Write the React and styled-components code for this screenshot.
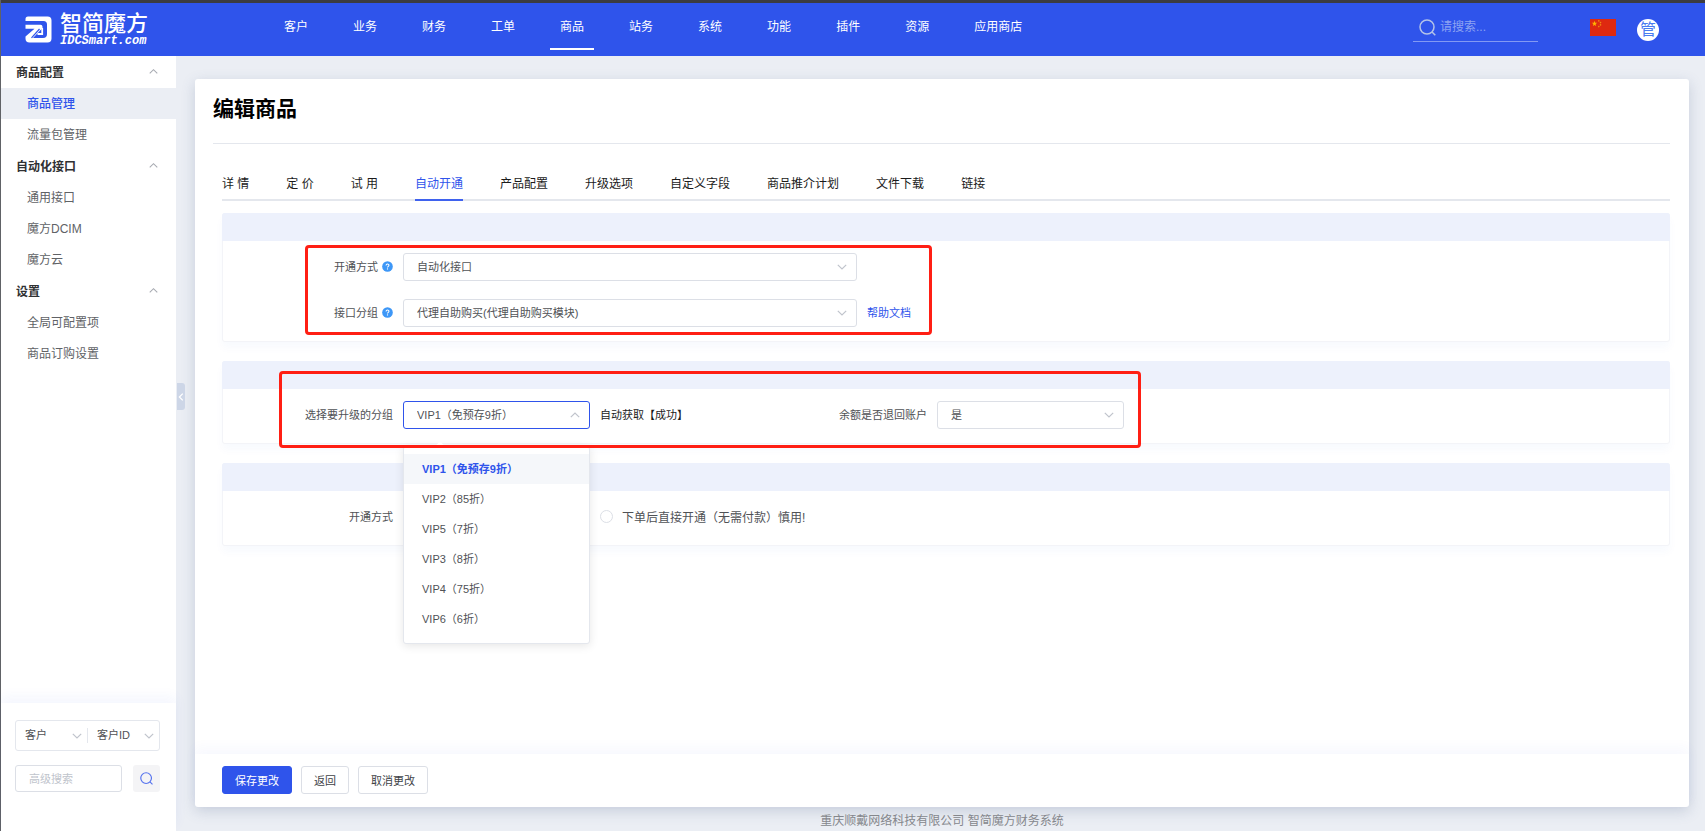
import React, { useState } from "react";
import styled, { createGlobalStyle } from "styled-components";

const GlobalStyle = createGlobalStyle`
  *, *::before, *::after {
    box-sizing: border-box;
  }
  body {
    margin: 0;
    background: #ebeef4;
  }
  body, button, input, select {
    font-family: "Liberation Sans", "Noto Sans CJK SC", sans-serif;
  }
  h1, h2, ul, p {
    margin: 0;
    padding: 0;
  }
  ul {
    list-style: none;
  }
  a {
    text-decoration: none;
  }
`;

const Page = styled.div`
  min-height: 100vh;
  display: flex;
  flex-direction: column;
  border-left: 1px solid #606266;
`;

const Header = styled.header`
  display: flex;
  align-items: flex-start;
  height: 56px;
  padding: 0 46px 0 24px;
  border-top: 3px solid #3c3c40;
  background: #2f54eb;
`;

const Logo = styled.a`
  display: flex;
  align-items: center;
  gap: 8px;
  width: 249px;
  height: 53px;
  flex-shrink: 0;
  color: #fff;
`;
const LogoText = styled.span`
  display: flex;
  flex-direction: column;
`;
const LogoName = styled.span`
  font-size: 22px;
  font-weight: 500;
  line-height: 22px;
`;
const LogoDomain = styled.span`
  font-family: "Liberation Mono", monospace;
  font-size: 12px;
  font-weight: 700;
  font-style: italic;
  line-height: 12px;
`;

const Nav = styled.nav`
  display: flex;
  flex: 1;
  gap: 25px;
`;
const NavLink = styled.a`
  padding: 14px 10px 11px;
  font-size: 12px;
  line-height: 20px;
  color: #fff;
  white-space: nowrap;
  border-bottom: 2px solid ${(props) => (props.$active ? "#fff" : "transparent")};
`;

const HeaderSearch = styled.label`
  display: flex;
  align-items: center;
  gap: 4px;
  width: 125px;
  height: 29px;
  margin: 10px 52px 0 0;
  padding-left: 6px;
  border-bottom: 1px solid #8299f3;
  color: #b4c3e8;

  input {
    width: 80px;
    padding: 0;
    border: 0;
    outline: 0;
    background: none;
    font-size: 12px;
    color: #fff;
  }
  input::placeholder {
    color: #8da3f2;
  }
`;
const Flag = styled.button`
  display: flex;
  margin: 16px 21px 0 0;
  padding: 0;
  border: 0;
  background: none;
`;
const Avatar = styled.button`
  width: 22px;
  height: 22px;
  margin-top: 16px;
  padding: 0;
  border: 0;
  border-radius: 50%;
  background: #fff;
  color: #4a7cf0;
  font-size: 16px;
  line-height: 20px;
`;

const Layout = styled.div`
  flex: 1;
  display: flex;
`;

const Sidebar = styled.aside`
  width: 175px;
  flex-shrink: 0;
  display: flex;
  flex-direction: column;
  background: #fff;
`;
const MenuTitle = styled.button`
  display: flex;
  align-items: center;
  justify-content: space-between;
  width: 100%;
  height: 32px;
  padding: 0 18px 2px 15px;
  border: 0;
  background: none;
  font-size: 12px;
  font-weight: 700;
  color: #303133;

  svg {
    color: #a8abb2;
  }
`;
const MenuLink = styled.a`
  display: block;
  padding: 1px 0 0 26px;
  font-size: 12px;
  line-height: 30px;
  color: ${(props) => (props.$active ? "#2f54eb" : "#606266")};
  font-weight: ${(props) => (props.$active ? 500 : 400)};
  background: ${(props) => (props.$active ? "#ebeef4" : "none")};
`;

const QuickSearch = styled.form`
  margin-top: auto;
  padding: 17px 16px 39px 14px;
  box-shadow: 0 -6px 12px rgba(47, 84, 235, 0.05);
`;
const Combo = styled.div`
  display: flex;
  align-items: center;
  height: 31px;
  margin-bottom: 14px;
  border: 1px solid #e4e7ed;
  border-radius: 3px;
`;
const ComboDivider = styled.span`
  width: 1px;
  height: 15px;
  background: #e4e7ed;
`;
const SearchRow = styled.div`
  display: flex;
  justify-content: space-between;
`;
const SearchInput = styled.input`
  width: 107px;
  height: 27px;
  padding: 0 13px;
  border: 1px solid #dcdfe6;
  border-radius: 3px;
  outline: 0;
  font-size: 11px;

  &::placeholder {
    color: #c0c4cc;
  }
`;
const SearchButton = styled.button`
  display: flex;
  align-items: center;
  justify-content: center;
  width: 27px;
  height: 27px;
  padding: 0;
  border: 0;
  border-radius: 3px;
  background: #f4f4f6;
  color: #5673ee;
`;

const Main = styled.main`
  position: relative;
  flex: 1;
  min-width: 0;
  display: flex;
  flex-direction: column;
  padding: 23px 16px 0 19px;
`;
const Collapse = styled.button`
  position: absolute;
  left: 1px;
  top: 327px;
  display: flex;
  align-items: center;
  justify-content: center;
  width: 8px;
  height: 27px;
  padding: 0;
  border: 0;
  border-radius: 0 3px 3px 0;
  background: #cdd6e7;
  color: #fff;
`;

const Card = styled.div`
  flex: 1;
  display: flex;
  flex-direction: column;
  border-radius: 3px;
  background: #fff;
  box-shadow: 0 4px 14px rgba(70, 90, 130, 0.22);
`;
const CardBody = styled.div`
  flex: 1;
  padding: 0 19px 24px 18px;
`;
const Title = styled.h1`
  padding: 16px 0 20px;
  border-bottom: 1px solid #e4e7ed;
  font-size: 21px;
  font-weight: 700;
  line-height: 28px;
  color: #000;
`;
const Content = styled.div`
  margin-left: 9px;
`;

const Tabs = styled.nav`
  display: flex;
  gap: 37px;
  margin: 26px 0 12px;
  box-shadow: inset 0 -2px #e4e7ed;
`;
const Tab = styled.a`
  font-size: 12px;
  line-height: 29px;
  color: ${(props) => (props.$active ? "#2f54eb" : "#1b1b1b")};
  border-bottom: 2px solid ${(props) => (props.$active ? "#3f62ee" : "transparent")};
`;

const Section = styled.section`
  position: relative;
  margin-bottom: 19px;
  border-radius: 3px;
  box-shadow: inset 0 0 0 1px #f3f4f8, 0 6px 8px rgba(47, 84, 235, 0.03);
`;
const SectionHead = styled.div`
  height: 28px;
  border-radius: 3px 3px 0 0;
  background: #edf1fc;
`;
const SectionBody = styled.div`
  display: flex;
  flex-direction: column;
  gap: 18px;
  padding: 12px 0 15px;
`;
const Row = styled.div`
  display: grid;
  grid-template-columns: ${(props) => props.$columns};
  align-items: center;
  column-gap: 10px;
  min-height: 28px;
`;
const Label = styled.label`
  display: flex;
  align-items: center;
  justify-content: flex-end;
  gap: 4px;
  padding-bottom: 2px;
  font-size: 11px;
  color: #505256;
`;
const Note = styled.span`
  padding-bottom: 2px;
  font-size: 11px;
  color: #1b1b1b;
  white-space: nowrap;
`;
const HelpLink = styled.a`
  padding-bottom: 2px;
  font-size: 11px;
  color: #2f54eb;
`;

const SelectBox = styled.div`
  position: relative;
  display: flex;
  flex: 1;
  align-items: center;
  min-width: 0;

  select {
    width: 100%;
    height: 28px;
    padding: 0 24px 1px ${(props) => (props.$bare ? 9 : 13)}px;
    border: ${(props) => (props.$bare ? 0 : 1)}px solid
      ${(props) => (props.$open ? "#2f54eb" : "#dcdfe6")};
    border-radius: 3px;
    outline: 0;
    appearance: none;
    background: none;
    font-size: 11px;
    color: #505256;
  }
`;
const Arrow = styled.span`
  position: absolute;
  right: ${(props) => (props.$bare ? 5 : 10)}px;
  display: flex;
  color: #c0c4cc;
  pointer-events: none;
`;

const Dropdown = styled.ul`
  position: absolute;
  top: 45px;
  left: 0;
  z-index: 2;
  width: 100%;
  padding: 7px 0 9px;
  border: 1px solid #e4e7ed;
  border-radius: 3px;
  background: #fff;
  box-shadow: 0 2px 10px rgba(0, 0, 0, 0.1);

  &::before {
    content: "";
    position: absolute;
    top: -4px;
    left: 32px;
    width: 8px;
    height: 8px;
    background: #fff;
    transform: rotate(45deg);
  }
`;
const Option = styled.li`
  padding-left: 18px;
  font-size: 11px;
  line-height: 30px;
  color: ${(props) => (props.$active ? "#2f54eb" : "#505256")};
  font-weight: ${(props) => (props.$active ? 700 : 400)};
  background: ${(props) => (props.$active ? "#f5f7fa" : "none")};
  cursor: pointer;
`;

const Radio = styled.label`
  display: flex;
  align-items: center;
  gap: 9px;
  padding-bottom: 1px;
  font-size: 12px;
  color: #505256;

  input {
    width: 13px;
    height: 13px;
    margin: 0;
    border: 1px solid #dcdfe6;
    border-radius: 50%;
    appearance: none;
    background: #fff;
  }
  input:checked {
    border: 4px solid #2f54eb;
  }
`;

// red annotation frame laid over a section
const Mark = styled.div`
  position: absolute;
  top: ${(props) => props.$top}px;
  left: ${(props) => props.$left}px;
  z-index: 3;
  width: ${(props) => props.$width}px;
  height: ${(props) => props.$height}px;
  border: 3px solid #ff1f14;
  border-radius: 4px;
  pointer-events: none;
`;

const Actions = styled.div`
  display: flex;
  align-items: center;
  gap: 9px;
  height: 53px;
  padding: 0 27px 2px;
  box-shadow: 0 -6px 12px rgba(47, 84, 235, 0.04);
`;
const Button = styled.button`
  height: 28px;
  padding: 0 12px;
  border: 1px solid ${(props) => (props.$primary ? "#2f54eb" : "#dcdfe6")};
  border-radius: 3px;
  background: ${(props) => (props.$primary ? "#2f54eb" : "#fff")};
  color: ${(props) => (props.$primary ? "#fff" : "#404246")};
  font-size: 11px;
`;
const Copyright = styled.p`
  padding-top: 4px;
  font-size: 12px;
  line-height: 20px;
  text-align: center;
  color: #85878c;
`;

const rotation = { down: 0, left: 90, up: 180 };

const Chevron = ({ dir = "down", size = 10, width = 1.2 }) => (
  <svg width={size} height={size} viewBox="0 0 10 10" fill="none" stroke="currentColor" strokeWidth={width}>
    <path d="M0.8 2.8 L5 7 L9.2 2.8" transform={`rotate(${rotation[dir]} 5 5)`} />
  </svg>
);

const SearchIcon = ({ size, width = 1.5 }) => (
  <svg width={size} height={size} viewBox="0 0 17 17" fill="none" stroke="currentColor" strokeWidth={width}>
    <circle cx="8" cy="8" r="7" />
    <path d="M13 13 L16.3 16.3" />
  </svg>
);

const HelpIcon = () => (
  <svg width="11" height="11" viewBox="0 0 12 12">
    <circle cx="6" cy="6" r="5.8" fill="#3d97f7" />
    <path
      d="M4.4 4.8 C4.4 2.7 7.6 2.7 7.6 4.7 C7.6 5.8 6 5.9 6 7.2"
      fill="none"
      stroke="#fff"
      strokeWidth="1.1"
    />
    <circle cx="6" cy="8.7" r="0.7" fill="#fff" />
  </svg>
);

const LogoMark = () => (
  <svg width="27" height="27" viewBox="0 0 27 27" fill="none">
    <path
      d="M0.5 5 V3 Q0.5 0.5 3 0.5 H22.5 Q26.5 0.5 26.5 4.5 V22.5 Q26.5 26.5 22.5 26.5 H4.5 Q0.5 26.5 0.5 22.5 V20.5 L9.5 12.8 H0.5 V8.8 H15.5 Q17.5 8.8 17.5 10.8 V12 L8 22 H18 Q22 22 22 18 V8.5 Q22 5 18.5 5 Z"
      fill="#fff"
    />
    <path d="M6.5 21.8 L14.5 13" stroke="#2f54eb" strokeWidth="1.2" />
    <path d="M12.5 18 H17.2 V12" stroke="#fff" strokeWidth="1.8" />
  </svg>
);

const FlagIcon = () => (
  <svg width="26" height="17" viewBox="0 0 26 17">
    <rect width="26" height="17" fill="#de2910" />
    <path
      d="M4.5 1.8 L5.2 3.8 L7.3 3.8 L5.6 5.1 L6.2 7.1 L4.5 5.9 L2.8 7.1 L3.4 5.1 L1.7 3.8 L3.8 3.8 Z"
      fill="#ffb400"
    />
    <g fill="#f08a10">
      <circle cx="8.8" cy="1.9" r="0.8" />
      <circle cx="10.5" cy="3.6" r="0.8" />
      <circle cx="10.5" cy="5.9" r="0.8" />
      <circle cx="8.8" cy="7.6" r="0.8" />
    </g>
  </svg>
);

const NAV = ["客户", "业务", "财务", "工单", "商品", "站务", "系统", "功能", "插件", "资源", "应用商店"];

const MENU = [
  { title: "商品配置", items: ["商品管理", "流量包管理"] },
  { title: "自动化接口", items: ["通用接口", "魔方DCIM", "魔方云"] },
  { title: "设置", items: ["全局可配置项", "商品订购设置"] },
];

const TABS = [
  "详 情",
  "定 价",
  "试 用",
  "自动开通",
  "产品配置",
  "升级选项",
  "自定义字段",
  "商品推介计划",
  "文件下载",
  "链接",
];

const GROUPS = [
  "VIP1（免预存9折）",
  "VIP2（85折）",
  "VIP5（7折）",
  "VIP3（8折）",
  "VIP4（75折）",
  "VIP6（6折）",
];

const Select = ({ id, options, bare, ...rest }) => (
  <SelectBox $bare={bare}>
    <select id={id} {...rest}>
      {options.map((option) => (
        <option key={option}>{option}</option>
      ))}
    </select>
    <Arrow $bare={bare}>
      <Chevron />
    </Arrow>
  </SelectBox>
);

const GroupSelect = ({ id }) => {
  const [open, setOpen] = useState(true);
  const [value, setValue] = useState(GROUPS[0]);

  return (
    <SelectBox $open={open}>
      <select
        id={id}
        value={value}
        onChange={(e) => setValue(e.target.value)}
        onMouseDown={(e) => {
          e.preventDefault();
          setOpen(!open);
        }}
      >
        {GROUPS.map((group) => (
          <option key={group}>{group}</option>
        ))}
      </select>
      <Arrow>
        <Chevron dir={open ? "up" : "down"} />
      </Arrow>
      {open && (
        <Dropdown role="listbox">
          {GROUPS.map((group) => (
            <Option
              key={group}
              role="option"
              aria-selected={group === value}
              $active={group === value}
              onClick={() => {
                setValue(group);
                setOpen(false);
              }}
            >
              {group}
            </Option>
          ))}
        </Dropdown>
      )}
    </SelectBox>
  );
};

const TopBar = () => (
  <Header>
    <Logo href="#">
      <LogoMark />
      <LogoText>
        <LogoName>智简魔方</LogoName>
        <LogoDomain>IDCSmart.com</LogoDomain>
      </LogoText>
    </Logo>
    <Nav>
      {NAV.map((item) => (
        <NavLink key={item} href="#" $active={item === "商品"}>
          {item}
        </NavLink>
      ))}
    </Nav>
    <HeaderSearch>
      <SearchIcon size={17} />
      <input type="text" placeholder="请搜索..." />
    </HeaderSearch>
    <Flag type="button">
      <FlagIcon />
    </Flag>
    <Avatar type="button">管</Avatar>
  </Header>
);

const SideMenu = () => (
  <Sidebar>
    {MENU.map((group) => (
      <div key={group.title}>
        <MenuTitle type="button">
          {group.title}
          <Chevron dir="up" size={9} />
        </MenuTitle>
        {group.items.map((item) => (
          <MenuLink key={item} href="#" $active={item === "商品管理"}>
            {item}
          </MenuLink>
        ))}
      </div>
    ))}
    <QuickSearch>
      <Combo>
        <Select bare options={["客户"]} />
        <ComboDivider />
        <Select bare options={["客户ID"]} />
      </Combo>
      <SearchRow>
        <SearchInput type="text" placeholder="高级搜索" />
        <SearchButton type="button">
          <SearchIcon size={13} />
        </SearchButton>
      </SearchRow>
    </QuickSearch>
  </Sidebar>
);

const App = () => {
  return (
    <>
      <GlobalStyle />
      <Page>
        <TopBar />
        <Layout>
          <SideMenu />
          <Main>
            <Collapse type="button">
              <Chevron dir="left" size={8} width={1.6} />
            </Collapse>
            <Card>
              <CardBody>
                <Title>编辑商品</Title>
                <Content>
                  <Tabs>
                    {TABS.map((tab) => (
                      <Tab key={tab} href="#" $active={tab === "自动开通"}>
                        {tab}
                      </Tab>
                    ))}
                  </Tabs>

                  <Section>
                    <SectionHead />
                    <SectionBody>
                      <Row $columns="171px 454px auto">
                        <Label htmlFor="open-type">
                          开通方式
                          <HelpIcon />
                        </Label>
                        <Select id="open-type" options={["自动化接口"]} />
                      </Row>
                      <Row $columns="171px 454px auto">
                        <Label htmlFor="api-group">
                          接口分组
                          <HelpIcon />
                        </Label>
                        <Select id="api-group" options={["代理自助购买(代理自助购买模块)"]} />
                        <HelpLink href="#">帮助文档</HelpLink>
                      </Row>
                    </SectionBody>
                    <Mark $top={32} $left={83} $width={627} $height={90} />
                  </Section>

                  <Section>
                    <SectionHead />
                    <SectionBody>
                      <Row $columns="171px 187px 120px 197px 187px">
                        <Label htmlFor="vip-group">选择要升级的分组</Label>
                        <GroupSelect id="vip-group" />
                        <Note>自动获取【成功】</Note>
                        <Label htmlFor="refund">余额是否退回账户</Label>
                        <Select id="refund" options={["是", "否"]} />
                      </Row>
                    </SectionBody>
                    <Mark $top={10} $left={57} $width={862} $height={77} />
                  </Section>

                  <Section>
                    <SectionHead />
                    <SectionBody>
                      <Row $columns="171px 187px auto">
                        <Label as="span">开通方式</Label>
                        <span />
                        <Radio>
                          <input type="radio" name="open-mode" />
                          下单后直接开通（无需付款）慎用!
                        </Radio>
                      </Row>
                    </SectionBody>
                  </Section>
                </Content>
              </CardBody>
              <Actions>
                <Button type="button" $primary>
                  保存更改
                </Button>
                <Button type="button">返回</Button>
                <Button type="button">取消更改</Button>
              </Actions>
            </Card>
            <Copyright>重庆顺戴网络科技有限公司 智简魔方财务系统</Copyright>
          </Main>
        </Layout>
      </Page>
    </>
  );
};

export default App;
